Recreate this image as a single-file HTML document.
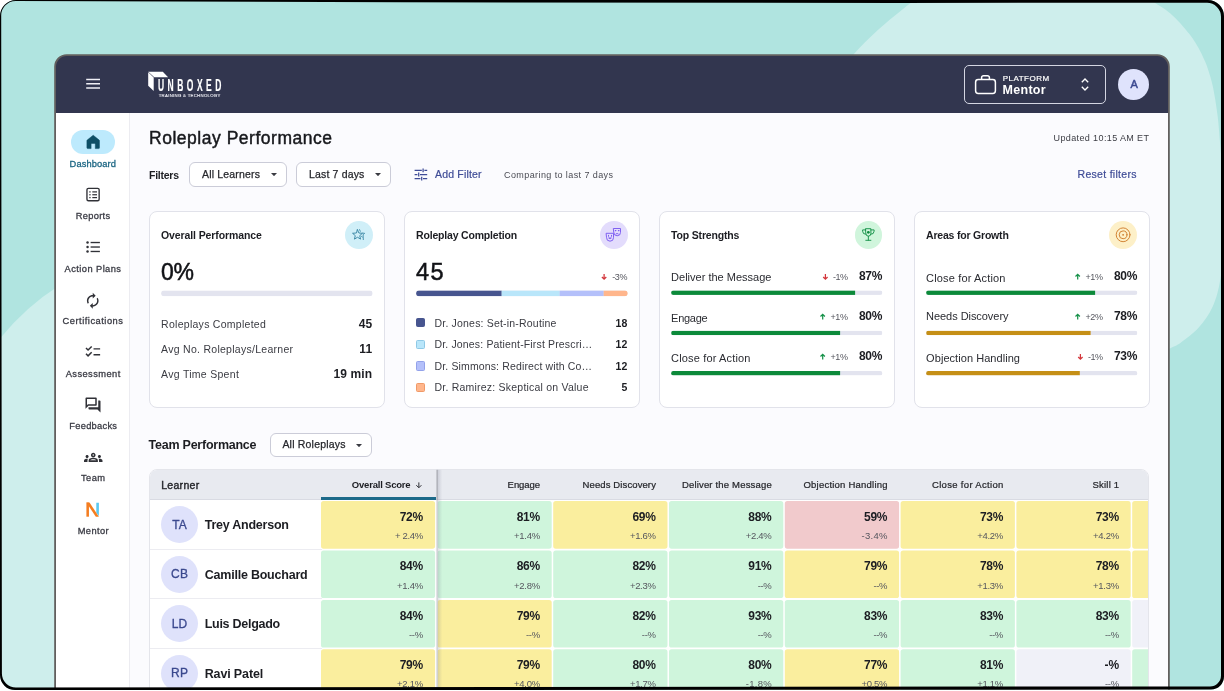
<!DOCTYPE html>
<html lang="en">
<head>
<meta charset="utf-8">
<title>Roleplay Performance</title>
<style>
*{box-sizing:border-box;margin:0;padding:0}
html,body{width:1224px;height:691px;overflow:hidden;background:#fff}
body{position:relative;font-family:"Liberation Sans",Arial,sans-serif;color:#1c1d22}
.a{position:absolute}
#bg{position:absolute;left:0;top:0;width:1224px;height:691px;background:#b0e4e0;overflow:hidden}
.circ{position:absolute;border-radius:50%;background:#ceeeec}
#frame{position:absolute;left:0;top:0;z-index:50;pointer-events:none}
#app{will-change:transform;position:absolute;left:0;top:0;width:1224px;height:691px;clip-path:inset(55px 55.2px 0 55.2px round 11.2px 11.2px 0 0);background:#fbfbfe}
#appb{position:absolute;left:0;top:0;z-index:40;pointer-events:none}
#hdr{position:absolute;left:55px;top:55px;width:1115px;height:57.5px;background:#32364f}
#side{position:absolute;left:55px;top:112.5px;width:74.5px;height:600px;background:#fff;border-right:1px solid #ececf1}
.t{position:absolute;white-space:nowrap;line-height:1}
.card{position:absolute;top:211px;width:236px;height:197px;background:#fff;border:1px solid #e1e2ea;border-radius:8px}
.sel{position:absolute;background:#fff;border:1px solid #cbccd8;border-radius:6px}
.bar{position:absolute;height:4.6px;border-radius:2.3px;background:#e3e4ef;overflow:hidden}
.bar i{position:absolute;left:0;top:0;height:100%;border-radius:2.3px 0 0 2.3px}
.cell{position:absolute;border-radius:2px}
</style>
</head>
<body>
<div id="bg"><svg class="a" style="left:0;top:0" width="1224" height="691" viewBox="0 0 1224 691"><path d="M820.0 100.0C822.7 95.8 830.3 82.8 836.0 75.0C841.7 67.2 847.4 61.0 854.4 53.5C861.4 46.0 868.5 38.4 877.9 30.0C887.3 21.6 901.6 10.0 910.6 3.0C919.6 -4.0 912.1 -4.8 932.0 -12.0C951.9 -19.2 997.3 -39.7 1030.0 -40.0C1062.7 -40.3 1109.1 -19.9 1128.0 -14.0C1146.9 -8.1 1139.0 -7.3 1143.5 -4.5C1148.0 -1.7 1151.6 0.6 1155.2 3.0C1158.8 5.3 1161.9 7.1 1165.3 9.6C1168.7 12.1 1172.1 14.9 1175.5 18.2C1178.9 21.5 1182.7 26.0 1185.6 29.4C1188.5 32.8 1190.5 35.3 1192.7 38.5C1194.9 41.7 1197.0 45.2 1198.8 48.6C1200.6 52.0 1202.3 55.4 1203.8 58.8C1205.3 62.2 1206.4 64.2 1207.9 68.9C1209.4 73.6 1211.3 79.0 1212.9 86.8C1214.5 94.6 1216.4 106.2 1217.6 115.8C1218.8 125.4 1219.4 135.7 1220.2 144.7C1221.0 153.7 1221.4 157.1 1222.5 170.0C1223.6 182.9 1227.3 204.1 1227.0 222.0C1226.7 239.9 1223.1 263.2 1220.7 277.3C1218.3 291.4 1216.3 298.4 1212.6 306.8C1208.9 315.2 1203.9 321.7 1198.7 327.6C1193.5 333.5 1186.1 338.8 1181.3 342.3C1176.5 345.8 1176.9 345.1 1170.0 348.4C1163.1 351.7 1168.3 356.7 1140.0 362.0C1111.7 367.3 1040.0 390.3 1000.0 380.0C960.0 369.7 930.0 346.7 900.0 300.0C870.0 253.3 833.3 133.3 820.0 100.0Z" fill="#ceeeec"/><path d="M-10 351.7A247.3 247.3 0 0 1 60 284.9V700H-10Z" fill="#ceeeec"/></svg></div>
<div id="app">
<div id="hdr"></div>
<svg class="a" style="left:85px;top:77px" width="17" height="14" viewBox="85 77 17 14"><path d="M86.200 79.500h13.800M86.200 83.750h13.800M86.200 88h13.800" stroke="#f0f0f6" stroke-width="1.500" fill="none"/></svg>
<svg class="a" style="left:146px;top:68px;overflow:visible" width="80" height="32" viewBox="146 68 80 32"><path d="M148.2 71.7H162.8L168.1 77.2H154.3Z" fill="#fff"/><path d="M148.2 72.3V85.7L153.7 91.0V77.6Z" fill="#fff"/><g transform="translate(158.0 91.4) scale(0.5 1)"><text x="0" y="0" font-family="Liberation Sans, Arial, sans-serif" font-size="17" font-weight="700" fill="#fff" stroke="#fff" stroke-width="0.2" letter-spacing="6.95">UNBOXED</text></g><text x="158.7" y="96.7" font-family="Liberation Sans, Arial, sans-serif" font-size="4.300" font-weight="400" fill="#f2f2f8" stroke="#f2f2f8" stroke-width=".1" letter-spacing="0.294">TRAINING &amp; TECHNOLOGY</text></svg>
<div class="a" style="left:964px;top:65px;width:142px;height:38.5px;border:1px solid #d4d6e2;border-radius:5px"></div>
<svg class="a" style="left:973.5px;top:74px" width="23" height="21" viewBox="0 0 23 21"><rect x="1.6" y="5.6" width="19.8" height="13.8" rx="2.6" fill="none" stroke="#fff" stroke-width="1.5"/><path d="M7.6 5.4V3.6a1.9 1.9 0 0 1 1.9-1.9h4a1.9 1.9 0 0 1 1.9 1.9v1.8" fill="none" stroke="#fff" stroke-width="1.5"/></svg>
<div class="t" style="left:1002.80px;top:75px;font-size:8px;color:#fff;letter-spacing:0.476px;-webkit-text-stroke:.2px #fff;">PLATFORM</div>
<div class="t" style="left:1002.60px;top:84px;font-size:12.5px;font-weight:700;color:#fff;letter-spacing:0.267px;">Mentor</div>
<svg class="a" style="left:1080.3px;top:77px" width="10" height="15" viewBox="0 0 10 15"><path d="M1.8 5.2L5 2l3.2 3.2M1.8 9.8L5 13l3.2-3.2" fill="none" stroke="#fff" stroke-width="1.35"/></svg>
<div class="a" style="left:1118.4px;top:68.5px;width:31px;height:31px;border-radius:50%;background:#dfe3fc"></div>
<div class="t" style="left:1130.43px;top:79px;font-size:11px;font-weight:500;color:#3a4890;-webkit-text-stroke:.45px #3a4890;">A</div>
<div id="side"></div>
<div class="a" style="left:71.2px;top:129.7px;width:44px;height:24.7px;border-radius:12.4px;background:#bdeafd"></div>
<div class="t" style="left:69.60px;top:160px;font-size:9.3px;color:#1d6784;letter-spacing:0.113px;-webkit-text-stroke:.3px #1d6784;">Dashboard</div>
<div class="t" style="left:75.70px;top:212px;font-size:9.3px;color:#3a3b44;letter-spacing:0.307px;-webkit-text-stroke:.3px #3a3b44;">Reports</div>
<div class="t" style="left:64.60px;top:265px;font-size:9.3px;color:#3a3b44;letter-spacing:0.427px;-webkit-text-stroke:.3px #3a3b44;">Action Plans</div>
<div class="t" style="left:62.60px;top:317px;font-size:9.3px;color:#3a3b44;letter-spacing:0.504px;-webkit-text-stroke:.3px #3a3b44;">Certifications</div>
<div class="t" style="left:65.70px;top:370px;font-size:9.3px;color:#3a3b44;letter-spacing:0.439px;-webkit-text-stroke:.3px #3a3b44;">Assessment</div>
<div class="t" style="left:69.30px;top:422px;font-size:9.3px;color:#3a3b44;letter-spacing:0.276px;-webkit-text-stroke:.3px #3a3b44;">Feedbacks</div>
<div class="t" style="left:81.00px;top:474px;font-size:9.3px;color:#3a3b44;letter-spacing:0.420px;-webkit-text-stroke:.3px #3a3b44;">Team</div>
<div class="t" style="left:77.70px;top:527px;font-size:9.3px;color:#3a3b44;letter-spacing:0.392px;-webkit-text-stroke:.3px #3a3b44;">Mentor</div>
<svg class="a" style="left:85px;top:133px" width="17" height="17" viewBox="85 133 17 17"><path d="M93.2 135.2L99.2 140.1a.7.7 0 0 1 .26.54V147.8a.8.8 0 0 1-.8.8H95.3V143.9a.5.5 0 0 0-.5-.5H91.6a.5.5 0 0 0-.5.5V148.6H87.7a.8.8 0 0 1-.8-.8V140.64a.7.7 0 0 1 .26-.54Z" fill="#0e4f66" stroke="#0e4f66" stroke-width=".5" stroke-linejoin="round"/></svg>
<svg class="a" style="left:84px;top:185px" width="18" height="19" viewBox="84 185 18 19"><rect x="86.950" y="188.350" width="12.200" height="12.400" rx="1.500" fill="none" stroke="#303137" stroke-width="1.350"/><g fill="#303137"><rect x="89.300" y="191.250" width="1.300" height="1.300"/><rect x="89.300" y="194.100" width="1.300" height="1.300"/><rect x="89.300" y="196.950" width="1.300" height="1.300"/><rect x="92.300" y="191.300" width="4.700" height="1.200"/><rect x="92.300" y="194.150" width="4.700" height="1.200"/><rect x="92.300" y="197" width="4.700" height="1.200"/></g></svg>
<svg class="a" style="left:84px;top:238px" width="18" height="18" viewBox="84 238 18 18"><g fill="#303137"><circle cx="87.550" cy="242.500" r="1.250"/><circle cx="87.550" cy="247" r="1.250"/><circle cx="87.550" cy="251.450" r="1.250"/><rect x="90.600" y="241.850" width="9.300" height="1.350"/><rect x="90.600" y="246.350" width="9.300" height="1.350"/><rect x="90.600" y="250.800" width="9.300" height="1.350"/></g></svg>
<svg class="a" style="left:84.25px;top:291.55px" width="17.5" height="17.5" viewBox="0 0 24 24" fill="#303137"><path d="M12 6v3l4-4-4-4v3c-4.42 0-8 3.580-8 8 0 1.570.460 3.030 1.240 4.260L6.700 14.800c-.45-.83-.7-1.79-.7-2.8 0-3.310 2.690-6 6-6zm6.760 1.740L17.300 9.200c.44.84.7 1.790.7 2.800 0 3.310-2.690 6-6 6v-3l-4 4 4 4v-3c4.420 0 8-3.580 8-8 0-1.570-.46-3.030-1.240-4.260z"/></svg>
<svg class="a" style="left:84.40px;top:343.20px" width="17.6" height="17.6" viewBox="0 0 24 24" fill="#303137"><path d="M22 7h-9v2h9V7zm0 8h-9v2h9v-2zM5.540 11L2 7.460l1.410-1.410 2.120 2.120 4.240-4.240 1.410 1.410L5.540 11zm0 8L2 15.460l1.410-1.410 2.120 2.120 4.240-4.240 1.410 1.410L5.540 19z"/></svg>
<svg class="a" style="left:84.00px;top:395.70px" width="18" height="18" viewBox="0 0 24 24" fill="#303137"><path d="M15 4v7H5.170L4 12.170V4h11m1-2H3c-.55 0-1 .45-1 1v14l4-4h10c.55 0 1-.45 1-1V3c0-.55-.45-1-1-1zm5 4h-2v9H6v2c0 .55.45 1 1 1h11l4 4V7c0-.55-.45-1-1-1z"/></svg>
<svg class="a" style="left:84.00px;top:447.75px" width="18.5" height="18.5" viewBox="0 0 24 24" fill="#303137"><path d="M4 13c1.100 0 2-.9 2-2s-.9-2-2-2-2 .9-2 2 .9 2 2 2zm1.130 1.100c-.37-.06-.74-.1-1.130-.1-.99 0-1.930.21-2.780.58C.48 14.900 0 15.620 0 16.430V18h4.500v-1.610c0-.83.23-1.610.63-2.290zM20 13c1.100 0 2-.9 2-2s-.9-2-2-2-2 .9-2 2 .9 2 2 2zm4 3.430c0-.81-.48-1.530-1.220-1.850-.85-.37-1.790-.58-2.780-.58-.39 0-.76.04-1.130.1.400.68.630 1.460.630 2.290V18H24v-1.570zm-7.760-2.780c-1.170-.52-2.610-.9-4.240-.9-1.630 0-3.070.39-4.240.9C6.680 14.130 6 15.210 6 16.390V18h12v-1.610c0-1.180-.68-2.260-1.760-2.740zM8.070 16c.09-.23.13-.39.91-.69.97-.38 1.990-.56 3.020-.56s2.050.18 3.020.56c.77.3.81.46.91.69H8.070zM12 8c.55 0 1 .45 1 1s-.45 1-1 1-1-.45-1-1 .45-1 1-1m0-2c-1.660 0-3 1.340-3 3s1.340 3 3 3 3-1.340 3-3-1.340-3-3-3z"/></svg>
<svg class="a" style="left:84px;top:500px" width="18" height="19" viewBox="84 500 18 19"><path d="M96.3 502.800H98.900V516.200L96.300 512.400Z" fill="#5bc8f0"/><path d="M86.400 502.600H88.950V516.700H86.400Z" fill="#f47d20"/><path d="M86.400 502.600H89.500L98.900 516.700H95.800Z" fill="#f47d20"/></svg><div class="t" style="left:149.00px;top:130px;font-size:17.5px;font-weight:500;color:#17181c;letter-spacing:0.519px;-webkit-text-stroke:.45px #17181c;">Roleplay Performance</div>
<div class="t" style="left:1053.50px;top:134px;font-size:9px;color:#3c3d44;letter-spacing:0.386px;">Updated 10:15 AM ET</div>
<div class="t" style="left:149.00px;top:170px;font-size:10.5px;font-weight:700;letter-spacing:-0.252px;">Filters</div>
<div class="sel" style="left:189px;top:162.3px;width:98px;height:24.6px"></div>
<div class="t" style="left:202.00px;top:169px;font-size:10.5px;color:#26272c;letter-spacing:0.179px;-webkit-text-stroke:.25px #26272c;">All Learners</div>
<svg class="a" style="left:270.60px;top:173.10px" width="6" height="3.4" viewBox="0 0 6 3.4"><path d="M0 0h6L3 3.2z" fill="#3a3b42"/></svg>
<div class="sel" style="left:296.4px;top:162.3px;width:94.2px;height:24.6px"></div>
<div class="t" style="left:309.00px;top:169px;font-size:10.5px;color:#26272c;letter-spacing:0.160px;-webkit-text-stroke:.25px #26272c;">Last 7 days</div>
<svg class="a" style="left:375.20px;top:173.10px" width="6" height="3.4" viewBox="0 0 6 3.4"><path d="M0 0h6L3 3.2z" fill="#3a3b42"/></svg>
<svg class="a" style="left:414px;top:168px" width="14" height="13" viewBox="0 0 14 13"><g stroke="#3f4c97" stroke-width="1.25" fill="none"><path d="M0.6 2.3h7.2M10.4 2.3h2.8M0.6 6.5h2.8M6 6.500h7.2M0.6 10.700h5.800M9 10.700h4.200"/><path d="M9.100 0.400v3.800M4.700 4.600v3.800M7.700 8.800v3.800"/></g></svg>
<div class="t" style="left:435.00px;top:169px;font-size:10.5px;font-weight:500;color:#3f4c97;letter-spacing:0.174px;-webkit-text-stroke:.2px #3f4c97;">Add Filter</div>
<div class="t" style="left:504.00px;top:171px;font-size:9px;color:#4b4c54;letter-spacing:0.411px;">Comparing to last 7 days</div>
<div class="t" style="left:1077.50px;top:169px;font-size:10.5px;font-weight:500;color:#3f4c97;letter-spacing:0.298px;-webkit-text-stroke:.2px #3f4c97;">Reset filters</div>
<div class="card" style="left:148.5px"></div>
<div class="card" style="left:403.7px"></div>
<div class="card" style="left:658.8px"></div>
<div class="card" style="left:913.6px"></div>
<div class="t" style="left:161.00px;top:230px;font-size:10.5px;font-weight:700;letter-spacing:-0.101px;">Overall Performance</div>
<div class="t" style="left:416.00px;top:230px;font-size:10.5px;font-weight:700;letter-spacing:-0.179px;">Roleplay Completion</div>
<div class="t" style="left:671.00px;top:230px;font-size:10.5px;font-weight:700;letter-spacing:-0.165px;">Top Strengths</div>
<div class="t" style="left:926.00px;top:230px;font-size:10.5px;font-weight:700;letter-spacing:-0.198px;">Areas for Growth</div>
<div class="a" style="left:344.8px;top:220.8px;width:27.8px;height:27.8px;border-radius:50%;background:#d0eff8"></div>
<div class="a" style="left:599.8px;top:220.8px;width:27.8px;height:27.8px;border-radius:50%;background:#e3dcfc"></div>
<div class="a" style="left:854.5px;top:220.8px;width:27.8px;height:27.8px;border-radius:50%;background:#d0f5dc"></div>
<div class="a" style="left:1109.3px;top:220.8px;width:27.8px;height:27.8px;border-radius:50%;background:#fdf0c8"></div>
<svg class="a" style="left:348px;top:224px" width="22" height="22" viewBox="348 224 22 22" fill="none" stroke-linejoin="round" stroke-linecap="round"><path d="M357.50 229.70L358.88 233.00L362.45 233.29L359.73 235.63L360.56 239.11L357.50 237.25L354.44 239.11L355.27 235.63L352.55 233.29L356.12 233.00Z" stroke="#2a7c9c" stroke-width=".85"/><path d="M359.6 229.6L360.3 231.300M362.700 233.100L364.600 233.300L363.100 234.800L363.300 239.600M361.500 236.200L362.200 237.100" stroke="#2a7c9c" stroke-width=".8"/></svg>
<svg class="a" style="left:603px;top:224px" width="22" height="22" viewBox="603 224 22 22" fill="none" stroke-linejoin="round" stroke-linecap="round"><g stroke="#7a5af0" stroke-width=".95"><path d="M613.700 228.500H620.500V232.400A3.400 3.400 0 0 1 613.700 232.400Z"/><path d="M615.300 230.600h.6M618.400 230.600h.6" stroke-width="1.100"/><path d="M615.900 233.900Q617.100 232.700 618.300 233.900" /><path d="M606.500 233.300H613.500V237.700A3.500 3.500 0 0 1 606.500 237.700Z" fill="#e3dcfc"/><path d="M608.500 235.300v1M611.500 235.300v1"/><path d="M608.900 238.200Q610 239.300 611.100 238.200Z" fill="#7a5af0" stroke-width=".8"/></g></svg>
<svg class="a" style="left:858px;top:224px" width="22" height="22" viewBox="858 224 22 22" fill="none" stroke-linejoin="round" stroke-linecap="round"><g stroke="#17924a" stroke-width=".95"><path d="M865.800 228.700H870.900V233.600A2.550 2.550 0 0 1 865.800 233.600Z"/><path d="M865.800 229.900H862.600V231.200A3.200 3.200 0 0 0 865.900 234.300M870.900 229.900H874.100V231.200A3.200 3.200 0 0 1 870.800 234.300"/><path d="M868.350 236.300V240.200M865.800 240.300H870.900"/><circle cx="868.350" cy="232.300" r="1.350" fill="#0f8a3f" stroke="none"/></g></svg>
<svg class="a" style="left:1112px;top:224px" width="22" height="22" viewBox="1112 224 22 22" fill="none" stroke-linejoin="round" stroke-linecap="round"><g stroke="#d07d2c" stroke-width=".95"><circle cx="1123.1" cy="234.800" r="6.900"/><circle cx="1123.100" cy="234.800" r="3.900"/><circle cx="1123.100" cy="234.800" r=".9" fill="#cf7a28" stroke="none"/></g></svg>
<div class="t" style="left:161.10px;top:261px;font-size:23px;font-weight:500;color:#111216;letter-spacing:-0.400px;-webkit-text-stroke:.5px #111216;">0%</div>
<svg class="a" style="left:160px;top:289px" width="215" height="9" viewBox="160 289 215 9"><clipPath id="bc1"><rect x="161.10" y="290.40" width="211.50" height="5.90" rx="2.95"/></clipPath><g clip-path="url(#bc1)"><rect x="161.10" y="290.40" width="211.50" height="5.90" fill="#e3e4ef"/></g></svg>
<div class="t" style="left:161.10px;top:319px;font-size:10.5px;color:#3a3b42;letter-spacing:0.272px;">Roleplays Completed</div>
<div class="t" style="left:358.66px;top:318px;font-size:12px;font-weight:700;letter-spacing:0.100px;">45</div>
<div class="t" style="left:161.10px;top:344px;font-size:10.5px;color:#3a3b42;letter-spacing:0.279px;">Avg No. Roleplays/Learner</div>
<div class="t" style="left:359.32px;top:343px;font-size:12px;font-weight:700;letter-spacing:0.100px;">11</div>
<div class="t" style="left:161.10px;top:369px;font-size:10.5px;color:#3a3b42;letter-spacing:0.290px;">Avg Time Spent</div>
<div class="t" style="left:333.58px;top:368px;font-size:12px;font-weight:700;letter-spacing:0.100px;">19 min</div>
<div class="t" style="left:416.10px;top:261px;font-size:23.5px;font-weight:500;color:#111216;letter-spacing:1.268px;-webkit-text-stroke:.5px #111216;">45</div>
<svg class="a" style="left:600px;top:271px" width="9" height="11" viewBox="600 271 9 11"><path d="M604.10 274.00V279.10M601.90 277.00L604.10 279.20L606.30 277.00" fill="none" stroke="#d3363b" stroke-width="1.250"/></svg>
<div class="t" style="left:612.20px;top:273px;font-size:9px;color:#55565e;letter-spacing:-0.401px;">-3%</div>
<svg class="a" style="left:415px;top:289px" width="215" height="9" viewBox="415 289 215 9"><clipPath id="bc2"><rect x="416.10" y="290.40" width="211.50" height="5.90" rx="2.95"/></clipPath><g clip-path="url(#bc2)"><rect x="416.10" y="290.40" width="211.50" height="5.90" fill="#e3e4ef"/><rect x="416.10" y="290.40" width="85.60" height="5.90" fill="#47558f"/><rect x="501.70" y="290.40" width="58.00" height="5.90" fill="#b9e6fa"/><rect x="559.70" y="290.40" width="44.00" height="5.90" fill="#b4c0fa"/><rect x="603.70" y="290.40" width="24.20" height="5.90" fill="#ffb68c"/></g></svg>
<div class="a" style="left:416.1px;top:318.2px;width:9.2px;height:9.2px;border-radius:1.5px;background:#47558f;border:.6px solid #47558f"></div>
<div class="t" style="left:434.50px;top:318px;font-size:10.5px;color:#3a3b42;letter-spacing:0.191px;">Dr. Jones: Set-in-Routine</div>
<div class="t" style="left:615.47px;top:318px;font-size:10.5px;font-weight:700;letter-spacing:0.250px;">18</div>
<div class="a" style="left:416.1px;top:339.8px;width:9.2px;height:9.2px;border-radius:1.5px;background:#b9e6fa;border:.6px solid #8fc9e6"></div>
<div class="t" style="left:434.50px;top:339px;font-size:10.5px;color:#3a3b42;letter-spacing:0.154px;">Dr. Jones: Patient-First Prescri…</div>
<div class="t" style="left:615.47px;top:339px;font-size:10.5px;font-weight:700;letter-spacing:0.250px;">12</div>
<div class="a" style="left:416.1px;top:361.4px;width:9.2px;height:9.2px;border-radius:1.5px;background:#b4c0fa;border:.6px solid #93a2ea"></div>
<div class="t" style="left:434.50px;top:361px;font-size:10.5px;color:#3a3b42;letter-spacing:0.139px;">Dr. Simmons: Redirect with Co…</div>
<div class="t" style="left:615.47px;top:361px;font-size:10.5px;font-weight:700;letter-spacing:0.250px;">12</div>
<div class="a" style="left:416.1px;top:383.0px;width:9.2px;height:9.2px;border-radius:1.5px;background:#ffb68c;border:.6px solid #f09a68"></div>
<div class="t" style="left:434.50px;top:382px;font-size:10.5px;color:#3a3b42;letter-spacing:0.218px;">Dr. Ramirez: Skeptical on Value</div>
<div class="t" style="left:621.56px;top:382px;font-size:10.5px;font-weight:700;letter-spacing:0.250px;">5</div>
<div class="t" style="left:671.10px;top:272px;font-size:11px;color:#2a2b31;">Deliver the Message</div>
<div class="t" style="left:859.00px;top:270px;font-size:12px;font-weight:700;letter-spacing:-0.356px;">87%</div>
<div class="t" style="left:832.90px;top:273px;font-size:9px;color:#55565e;letter-spacing:-0.501px;">-1%</div>
<svg class="a" style="left:821px;top:271px" width="9" height="11" viewBox="821 271 9 11"><path d="M825.40 274.00V279.10M823.20 277.00L825.40 279.20L827.60 277.00" fill="none" stroke="#d3363b" stroke-width="1.250"/></svg>
<svg class="a" style="left:670px;top:289px" width="215" height="8" viewBox="670 289 215 8"><clipPath id="bc3"><rect x="671.10" y="290.40" width="211.30" height="4.50" rx="2.25"/></clipPath><g clip-path="url(#bc3)"><rect x="671.10" y="290.40" width="211.30" height="4.50" fill="#e3e4ef"/><rect x="671.10" y="290.40" width="184.00" height="4.50" fill="#0c8a3a"/></g></svg>
<div class="t" style="left:671.10px;top:313px;font-size:11px;color:#2a2b31;letter-spacing:-0.266px;">Engage</div>
<div class="t" style="left:859.00px;top:310px;font-size:12px;font-weight:700;letter-spacing:-0.356px;">80%</div>
<div class="t" style="left:830.50px;top:313px;font-size:9px;color:#55565e;letter-spacing:-0.431px;">+1%</div>
<svg class="a" style="left:818px;top:311px" width="9" height="11" viewBox="818 311 9 11"><path d="M822.70 319.50V314.40M820.50 316.50L822.70 314.30L824.90 316.50" fill="none" stroke="#17924a" stroke-width="1.250"/></svg>
<svg class="a" style="left:670px;top:329px" width="215" height="8" viewBox="670 329 215 8"><clipPath id="bc4"><rect x="671.10" y="330.65" width="211.30" height="4.50" rx="2.25"/></clipPath><g clip-path="url(#bc4)"><rect x="671.10" y="330.65" width="211.30" height="4.50" fill="#e3e4ef"/><rect x="671.10" y="330.65" width="169.00" height="4.50" fill="#0c8a3a"/></g></svg>
<div class="t" style="left:671.10px;top:353px;font-size:11px;color:#2a2b31;letter-spacing:0.151px;">Close for Action</div>
<div class="t" style="left:859.00px;top:350px;font-size:12px;font-weight:700;letter-spacing:-0.356px;">80%</div>
<div class="t" style="left:830.50px;top:353px;font-size:9px;color:#55565e;letter-spacing:-0.431px;">+1%</div>
<svg class="a" style="left:818px;top:351px" width="9" height="11" viewBox="818 351 9 11"><path d="M822.70 359.50V354.40M820.50 356.50L822.70 354.30L824.90 356.50" fill="none" stroke="#17924a" stroke-width="1.250"/></svg>
<svg class="a" style="left:670px;top:369px" width="215" height="8" viewBox="670 369 215 8"><clipPath id="bc5"><rect x="671.10" y="370.90" width="211.30" height="4.50" rx="2.25"/></clipPath><g clip-path="url(#bc5)"><rect x="671.10" y="370.90" width="211.30" height="4.50" fill="#e3e4ef"/><rect x="671.10" y="370.90" width="169.00" height="4.50" fill="#0c8a3a"/></g></svg>
<div class="t" style="left:926.10px;top:273px;font-size:11px;color:#2a2b31;letter-spacing:0.151px;">Close for Action</div>
<div class="t" style="left:1114.00px;top:270px;font-size:12px;font-weight:700;letter-spacing:-0.356px;">80%</div>
<div class="t" style="left:1085.50px;top:273px;font-size:9px;color:#55565e;letter-spacing:-0.431px;">+1%</div>
<svg class="a" style="left:1073px;top:271px" width="9" height="11" viewBox="1073 271 9 11"><path d="M1077.70 279.50V274.40M1075.50 276.50L1077.70 274.30L1079.90 276.50" fill="none" stroke="#17924a" stroke-width="1.250"/></svg>
<svg class="a" style="left:925px;top:289px" width="215" height="8" viewBox="925 289 215 8"><clipPath id="bc6"><rect x="926.10" y="290.40" width="211.30" height="4.50" rx="2.25"/></clipPath><g clip-path="url(#bc6)"><rect x="926.10" y="290.40" width="211.30" height="4.50" fill="#e3e4ef"/><rect x="926.10" y="290.40" width="169.00" height="4.50" fill="#0c8a3a"/></g></svg>
<div class="t" style="left:926.10px;top:311px;font-size:11px;color:#2a2b31;letter-spacing:-0.053px;">Needs Discovery</div>
<div class="t" style="left:1114.00px;top:310px;font-size:12px;font-weight:700;letter-spacing:-0.356px;">78%</div>
<div class="t" style="left:1085.50px;top:313px;font-size:9px;color:#55565e;letter-spacing:-0.431px;">+2%</div>
<svg class="a" style="left:1073px;top:311px" width="9" height="11" viewBox="1073 311 9 11"><path d="M1077.70 319.50V314.40M1075.50 316.50L1077.70 314.30L1079.90 316.50" fill="none" stroke="#17924a" stroke-width="1.250"/></svg>
<svg class="a" style="left:925px;top:329px" width="215" height="8" viewBox="925 329 215 8"><clipPath id="bc7"><rect x="926.10" y="330.65" width="211.30" height="4.50" rx="2.25"/></clipPath><g clip-path="url(#bc7)"><rect x="926.10" y="330.65" width="211.30" height="4.50" fill="#e3e4ef"/><rect x="926.10" y="330.65" width="164.50" height="4.50" fill="#c58f16"/></g></svg>
<div class="t" style="left:926.10px;top:353px;font-size:11px;color:#2a2b31;letter-spacing:0.056px;">Objection Handling</div>
<div class="t" style="left:1114.00px;top:350px;font-size:12px;font-weight:700;letter-spacing:-0.356px;">73%</div>
<div class="t" style="left:1087.90px;top:353px;font-size:9px;color:#55565e;letter-spacing:-0.501px;">-1%</div>
<svg class="a" style="left:1076px;top:351px" width="9" height="11" viewBox="1076 351 9 11"><path d="M1080.40 354.00V359.10M1078.20 357.00L1080.40 359.20L1082.60 357.00" fill="none" stroke="#d3363b" stroke-width="1.250"/></svg>
<svg class="a" style="left:925px;top:369px" width="215" height="8" viewBox="925 369 215 8"><clipPath id="bc8"><rect x="926.10" y="370.90" width="211.30" height="4.50" rx="2.25"/></clipPath><g clip-path="url(#bc8)"><rect x="926.10" y="370.90" width="211.30" height="4.50" fill="#e3e4ef"/><rect x="926.10" y="370.90" width="153.70" height="4.50" fill="#c58f16"/></g></svg><div class="t" style="left:148.60px;top:439px;font-size:12.5px;font-weight:700;letter-spacing:-0.248px;">Team Performance</div>
<div class="sel" style="left:270.2px;top:433px;width:101.6px;height:24px"></div>
<div class="t" style="left:282.40px;top:439px;font-size:10.5px;color:#26272c;letter-spacing:0.201px;-webkit-text-stroke:.25px #26272c;">All Roleplays</div>
<svg class="a" style="left:355.8px;top:443.5px" width="6" height="3.4" viewBox="0 0 6 3.4"><path d="M0 0h6L3 3.200z" fill="#3a3b42"/></svg>
<div class="a" style="left:148.6px;top:469.3px;width:1000.6px;height:300px;border:1px solid #e4e5eb;border-radius:8px 8px 0 0;background:#fff;overflow:hidden"><div class="a" style="left:0;top:0;width:100%;height:30.2px;background:#e8eaf0;border-bottom:1px solid #d9dbe3"></div></div>
<div class="t" style="left:161.20px;top:480px;font-size:10.5px;font-weight:500;color:#26272c;letter-spacing:0.301px;-webkit-text-stroke:.4px #26272c;">Learner</div>
<div class="t" style="left:351.80px;top:480px;font-size:9.5px;font-weight:700;letter-spacing:-0.205px;">Overall Score</div>
<svg class="a" style="left:414px;top:480px" width="10" height="10" viewBox="414 480 10 10"><path d="M418.850 482.400V487.500M416.300 485.200L418.850 487.750L421.400 485.200" fill="none" stroke="#303137" stroke-width="1"/></svg>
<div class="a" style="left:320.6px;top:497.4px;width:115.6px;height:2.600px;background:#1d6a8a"></div>
<div class="t" style="left:507.60px;top:480px;font-size:9.5px;font-weight:500;color:#26272c;letter-spacing:-0.051px;-webkit-text-stroke:.22px #26272c;">Engage</div>
<div class="t" style="left:582.60px;top:480px;font-size:9.5px;font-weight:500;color:#26272c;letter-spacing:0.107px;-webkit-text-stroke:.22px #26272c;">Needs Discovery</div>
<div class="t" style="left:681.90px;top:480px;font-size:9.5px;font-weight:500;color:#26272c;letter-spacing:0.178px;-webkit-text-stroke:.22px #26272c;">Deliver the Message</div>
<div class="t" style="left:803.50px;top:480px;font-size:9.5px;font-weight:500;color:#26272c;letter-spacing:0.219px;-webkit-text-stroke:.22px #26272c;">Objection Handling</div>
<div class="t" style="left:932.00px;top:480px;font-size:9.5px;font-weight:500;color:#26272c;letter-spacing:0.318px;-webkit-text-stroke:.22px #26272c;">Close for Action</div>
<div class="t" style="left:1092.50px;top:480px;font-size:9.5px;font-weight:500;color:#26272c;letter-spacing:0.209px;-webkit-text-stroke:.22px #26272c;">Skill 1</div>
<svg class="a" style="left:300px;top:490px" width="848.2" height="201" viewBox="300 490 848.2 201"><rect x="321.00" y="501.10" width="114.10" height="47.60" rx="2.600" fill="#faee9e"/><rect x="437.40" y="501.10" width="114.30" height="47.60" rx="2.600" fill="#cff5dc"/><rect x="553.20" y="501.10" width="114.30" height="47.60" rx="2.600" fill="#faee9e"/><rect x="669.00" y="501.10" width="114.30" height="47.60" rx="2.600" fill="#cff5dc"/><rect x="784.80" y="501.10" width="114.30" height="47.60" rx="2.600" fill="#f1cacc"/><rect x="900.60" y="501.10" width="114.30" height="47.60" rx="2.600" fill="#faee9e"/><rect x="1016.40" y="501.10" width="114.30" height="47.60" rx="2.600" fill="#faee9e"/><rect x="1132.20" y="501.10" width="23.00" height="47.60" rx="2.600" fill="#faee9e"/><rect x="321.00" y="550.50" width="114.10" height="47.60" rx="2.600" fill="#cff5dc"/><rect x="437.40" y="550.50" width="114.30" height="47.60" rx="2.600" fill="#cff5dc"/><rect x="553.20" y="550.50" width="114.30" height="47.60" rx="2.600" fill="#cff5dc"/><rect x="669.00" y="550.50" width="114.30" height="47.60" rx="2.600" fill="#cff5dc"/><rect x="784.80" y="550.50" width="114.30" height="47.60" rx="2.600" fill="#faee9e"/><rect x="900.60" y="550.50" width="114.30" height="47.60" rx="2.600" fill="#faee9e"/><rect x="1016.40" y="550.50" width="114.30" height="47.60" rx="2.600" fill="#faee9e"/><rect x="1132.20" y="550.50" width="23.00" height="47.60" rx="2.600" fill="#faee9e"/><rect x="321.00" y="599.90" width="114.10" height="47.60" rx="2.600" fill="#cff5dc"/><rect x="437.40" y="599.90" width="114.30" height="47.60" rx="2.600" fill="#faee9e"/><rect x="553.20" y="599.90" width="114.30" height="47.60" rx="2.600" fill="#cff5dc"/><rect x="669.00" y="599.90" width="114.30" height="47.60" rx="2.600" fill="#cff5dc"/><rect x="784.80" y="599.90" width="114.30" height="47.60" rx="2.600" fill="#cff5dc"/><rect x="900.60" y="599.90" width="114.30" height="47.60" rx="2.600" fill="#cff5dc"/><rect x="1016.40" y="599.90" width="114.30" height="47.60" rx="2.600" fill="#cff5dc"/><rect x="1132.20" y="599.90" width="23.00" height="47.60" rx="2.600" fill="#f0f1f8"/><rect x="321.00" y="649.30" width="114.10" height="47.60" rx="2.600" fill="#faee9e"/><rect x="437.40" y="649.30" width="114.30" height="47.60" rx="2.600" fill="#faee9e"/><rect x="553.20" y="649.30" width="114.30" height="47.60" rx="2.600" fill="#cff5dc"/><rect x="669.00" y="649.30" width="114.30" height="47.60" rx="2.600" fill="#cff5dc"/><rect x="784.80" y="649.30" width="114.30" height="47.60" rx="2.600" fill="#faee9e"/><rect x="900.60" y="649.30" width="114.30" height="47.60" rx="2.600" fill="#cff5dc"/><rect x="1016.40" y="649.30" width="114.30" height="47.60" rx="2.600" fill="#f0f1f8"/><rect x="1132.20" y="649.30" width="23.00" height="47.60" rx="2.600" fill="#cff5dc"/></svg>
<div class="a" style="left:161px;top:506.4px;width:37px;height:37px;border-radius:50%;background:#dfe2fb"></div>
<div class="t" style="left:172.18px;top:519px;font-size:12px;font-weight:500;color:#3b498e;letter-spacing:0.200px;-webkit-text-stroke:.3px #3b498e;">TA</div>
<div class="t" style="left:204.70px;top:519px;font-size:12.5px;font-weight:700;letter-spacing:-0.230px;">Trey Anderson</div>
<div class="t" style="left:399.70px;top:511px;font-size:12px;font-weight:700;letter-spacing:-0.306px;">72%</div>
<div class="t" style="left:394.90px;top:531px;font-size:9.5px;color:#55565e;letter-spacing:-0.328px;">+ 2.4%</div>
<div class="t" style="left:516.70px;top:511px;font-size:12px;font-weight:700;letter-spacing:-0.306px;">81%</div>
<div class="t" style="left:514.10px;top:531px;font-size:9.5px;color:#55565e;letter-spacing:-0.300px;">+1.4%</div>
<div class="t" style="left:632.50px;top:511px;font-size:12px;font-weight:700;letter-spacing:-0.306px;">69%</div>
<div class="t" style="left:629.90px;top:531px;font-size:9.5px;color:#55565e;letter-spacing:-0.300px;">+1.6%</div>
<div class="t" style="left:748.30px;top:511px;font-size:12px;font-weight:700;letter-spacing:-0.306px;">88%</div>
<div class="t" style="left:745.70px;top:531px;font-size:9.5px;color:#55565e;letter-spacing:-0.300px;">+2.4%</div>
<div class="t" style="left:864.10px;top:511px;font-size:12px;font-weight:700;letter-spacing:-0.306px;">59%</div>
<div class="t" style="left:861.50px;top:531px;font-size:9.5px;color:#55565e;letter-spacing:0.296px;">-3.4%</div>
<div class="t" style="left:979.90px;top:511px;font-size:12px;font-weight:700;letter-spacing:-0.306px;">73%</div>
<div class="t" style="left:977.30px;top:531px;font-size:9.5px;color:#55565e;letter-spacing:-0.300px;">+4.2%</div>
<div class="t" style="left:1095.70px;top:511px;font-size:12px;font-weight:700;letter-spacing:-0.306px;">73%</div>
<div class="t" style="left:1093.10px;top:531px;font-size:9.5px;color:#55565e;letter-spacing:-0.300px;">+4.2%</div>
<div class="a" style="left:149.6px;top:548.9px;width:172px;height:1px;background:#ececf1"></div>
<div class="a" style="left:161px;top:555.8px;width:37px;height:37px;border-radius:50%;background:#dfe2fb"></div>
<div class="t" style="left:171.07px;top:568px;font-size:12px;font-weight:500;color:#3b498e;letter-spacing:0.200px;-webkit-text-stroke:.3px #3b498e;">CB</div>
<div class="t" style="left:204.70px;top:569px;font-size:12.5px;font-weight:700;letter-spacing:-0.218px;">Camille Bouchard</div>
<div class="t" style="left:399.70px;top:560px;font-size:12px;font-weight:700;letter-spacing:-0.306px;">84%</div>
<div class="t" style="left:397.10px;top:581px;font-size:9.5px;color:#55565e;letter-spacing:-0.300px;">+1.4%</div>
<div class="t" style="left:516.70px;top:560px;font-size:12px;font-weight:700;letter-spacing:-0.306px;">86%</div>
<div class="t" style="left:514.10px;top:581px;font-size:9.5px;color:#55565e;letter-spacing:-0.300px;">+2.8%</div>
<div class="t" style="left:632.50px;top:560px;font-size:12px;font-weight:700;letter-spacing:-0.306px;">82%</div>
<div class="t" style="left:629.90px;top:581px;font-size:9.5px;color:#55565e;letter-spacing:-0.300px;">+2.3%</div>
<div class="t" style="left:748.30px;top:560px;font-size:12px;font-weight:700;letter-spacing:-0.306px;">91%</div>
<div class="t" style="left:757.63px;top:581px;font-size:9.5px;color:#55565e;letter-spacing:-0.350px;">--%</div>
<div class="t" style="left:864.10px;top:560px;font-size:12px;font-weight:700;letter-spacing:-0.306px;">79%</div>
<div class="t" style="left:873.43px;top:581px;font-size:9.5px;color:#55565e;letter-spacing:-0.350px;">--%</div>
<div class="t" style="left:979.90px;top:560px;font-size:12px;font-weight:700;letter-spacing:-0.306px;">78%</div>
<div class="t" style="left:977.30px;top:581px;font-size:9.5px;color:#55565e;letter-spacing:-0.300px;">+1.3%</div>
<div class="t" style="left:1095.70px;top:560px;font-size:12px;font-weight:700;letter-spacing:-0.306px;">78%</div>
<div class="t" style="left:1093.10px;top:581px;font-size:9.5px;color:#55565e;letter-spacing:-0.300px;">+1.3%</div>
<div class="a" style="left:149.6px;top:598.3px;width:172px;height:1px;background:#ececf1"></div>
<div class="a" style="left:161px;top:605.2px;width:37px;height:37px;border-radius:50%;background:#dfe2fb"></div>
<div class="t" style="left:171.73px;top:618px;font-size:12px;font-weight:500;color:#3b498e;letter-spacing:0.200px;-webkit-text-stroke:.3px #3b498e;">LD</div>
<div class="t" style="left:204.70px;top:618px;font-size:12.5px;font-weight:700;letter-spacing:-0.270px;">Luis Delgado</div>
<div class="t" style="left:399.70px;top:610px;font-size:12px;font-weight:700;letter-spacing:-0.306px;">84%</div>
<div class="t" style="left:409.03px;top:630px;font-size:9.5px;color:#55565e;letter-spacing:-0.350px;">--%</div>
<div class="t" style="left:516.70px;top:610px;font-size:12px;font-weight:700;letter-spacing:-0.306px;">79%</div>
<div class="t" style="left:526.03px;top:630px;font-size:9.5px;color:#55565e;letter-spacing:-0.350px;">--%</div>
<div class="t" style="left:632.50px;top:610px;font-size:12px;font-weight:700;letter-spacing:-0.306px;">82%</div>
<div class="t" style="left:641.83px;top:630px;font-size:9.5px;color:#55565e;letter-spacing:-0.350px;">--%</div>
<div class="t" style="left:748.30px;top:610px;font-size:12px;font-weight:700;letter-spacing:-0.306px;">93%</div>
<div class="t" style="left:757.63px;top:630px;font-size:9.5px;color:#55565e;letter-spacing:-0.350px;">--%</div>
<div class="t" style="left:864.10px;top:610px;font-size:12px;font-weight:700;letter-spacing:-0.306px;">83%</div>
<div class="t" style="left:873.43px;top:630px;font-size:9.5px;color:#55565e;letter-spacing:-0.350px;">--%</div>
<div class="t" style="left:979.90px;top:610px;font-size:12px;font-weight:700;letter-spacing:-0.306px;">83%</div>
<div class="t" style="left:989.23px;top:630px;font-size:9.5px;color:#55565e;letter-spacing:-0.350px;">--%</div>
<div class="t" style="left:1095.70px;top:610px;font-size:12px;font-weight:700;letter-spacing:-0.306px;">83%</div>
<div class="t" style="left:1105.03px;top:630px;font-size:9.5px;color:#55565e;letter-spacing:-0.350px;">--%</div>
<div class="a" style="left:149.6px;top:647.7px;width:172px;height:1px;background:#ececf1"></div>
<div class="a" style="left:161px;top:654.6px;width:37px;height:37px;border-radius:50%;background:#dfe2fb"></div>
<div class="t" style="left:171.07px;top:667px;font-size:12px;font-weight:500;color:#3b498e;letter-spacing:0.200px;-webkit-text-stroke:.3px #3b498e;">RP</div>
<div class="t" style="left:204.70px;top:668px;font-size:12.5px;font-weight:700;letter-spacing:-0.139px;">Ravi Patel</div>
<div class="t" style="left:399.70px;top:659px;font-size:12px;font-weight:700;letter-spacing:-0.306px;">79%</div>
<div class="t" style="left:397.10px;top:679px;font-size:9.5px;color:#55565e;letter-spacing:-0.300px;">+2.1%</div>
<div class="t" style="left:516.70px;top:659px;font-size:12px;font-weight:700;letter-spacing:-0.306px;">79%</div>
<div class="t" style="left:514.10px;top:679px;font-size:9.5px;color:#55565e;letter-spacing:-0.300px;">+4.0%</div>
<div class="t" style="left:632.50px;top:659px;font-size:12px;font-weight:700;letter-spacing:-0.306px;">80%</div>
<div class="t" style="left:629.90px;top:679px;font-size:9.5px;color:#55565e;letter-spacing:-0.300px;">+1.7%</div>
<div class="t" style="left:748.30px;top:659px;font-size:12px;font-weight:700;letter-spacing:-0.306px;">80%</div>
<div class="t" style="left:745.70px;top:679px;font-size:9.5px;color:#55565e;letter-spacing:0.296px;">-1.8%</div>
<div class="t" style="left:864.10px;top:659px;font-size:12px;font-weight:700;letter-spacing:-0.306px;">77%</div>
<div class="t" style="left:861.50px;top:679px;font-size:9.5px;color:#55565e;letter-spacing:-0.300px;">+0.5%</div>
<div class="t" style="left:979.90px;top:659px;font-size:12px;font-weight:700;letter-spacing:-0.306px;">81%</div>
<div class="t" style="left:977.30px;top:679px;font-size:9.5px;color:#55565e;letter-spacing:-0.300px;">+1.1%</div>
<div class="t" style="left:1104.60px;top:659px;font-size:12px;font-weight:700;letter-spacing:-0.164px;">-%</div>
<div class="t" style="left:1105.03px;top:679px;font-size:9.5px;color:#55565e;letter-spacing:-0.350px;">--%</div>
<svg class="a" style="left:430px;top:469px" width="14" height="222" viewBox="430 469 14 222"><defs><linearGradient id="dsh" x1="0" x2="1" y1="0" y2="0"><stop offset="0" stop-color="#5a5f78" stop-opacity=".2"/><stop offset="1" stop-color="#5a5f78" stop-opacity="0"/></linearGradient></defs><rect x="437.700" y="469.800" width="4.500" height="222" fill="url(#dsh)"/><rect x="436.500" y="469.800" width="1.250" height="30.400" fill="#a4a5ad"/><rect x="436.500" y="500.200" width="1.250" height="200" fill="#c6c7ce"/></svg>
</div>
<svg id="appb" width="1224" height="691" viewBox="0 0 1224 691"><path d="M55.1 700V66.700A11.600 11.600 0 0 1 66.700 55.100H1157.300A11.600 11.600 0 0 1 1168.900 66.700V700" fill="none" stroke="#625f5e" stroke-width="1.800"/></svg>
<svg id="frame" width="1224" height="691" viewBox="0 0 1224 691"><path fill="#fff" fill-rule="evenodd" d="M-5 -5H1230V700H-5ZM16 0H1208A16 16 0 0 1 1224 16V676.600A13 13 0 0 1 1211 689.600L15 690.100A15 15 0 0 1 0 675.100V16A16 16 0 0 1 16 0Z"/><path fill="#000" fill-rule="evenodd" d="M16 0H1208A16 16 0 0 1 1224 16V676.600A13 13 0 0 1 1211 689.600L15 690.100A15 15 0 0 1 0 675.100V16A16 16 0 0 1 16 0ZM15.700 1L100 1.300L400 2.300L900 2.900L1207 2.800A14 14 0 0 1 1221 16.800V675.400A11 11 0 0 1 1210 686.400L16 687.500A14 14 0 0 1 1.900 673.500L1.200 15.500A14.500 14.500 0 0 1 15.700 1Z"/></svg>
</body>
</html>
